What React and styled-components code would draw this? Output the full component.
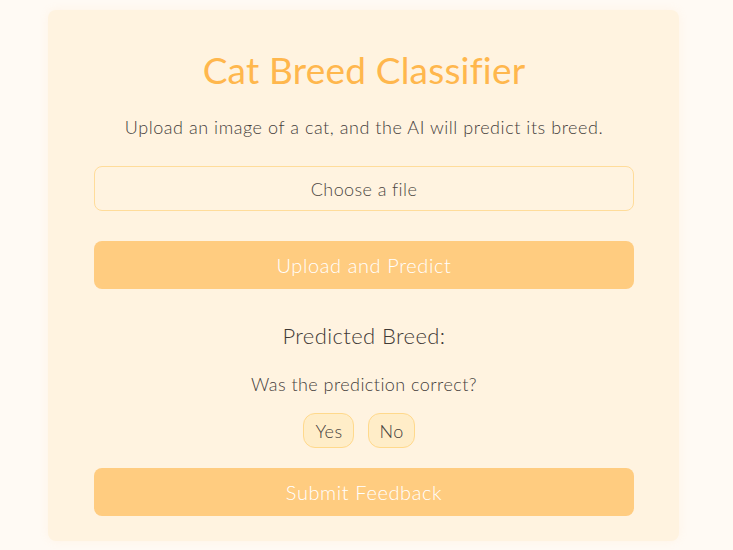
import React, { useState } from 'react'
import styled, { createGlobalStyle } from 'styled-components'

const GlobalStyle = createGlobalStyle`
    html, body {
        margin: 0;
        padding: 0;
        background: #fffaf4;
    }
    body {
        font-family: 'Lato', 'Noto Sans', sans-serif;
        color: #555555;
    }
`

const Page = styled.main`
    padding: 10px 54px 9px 48px;
`

const Card = styled.section`
    box-sizing: border-box;
    width: 631px;
    padding: 38px 45px 25px 46px;
    background: #fff3e0;
    border-radius: 8px;
    box-shadow: 0 0 10px rgba(255, 200, 140, 0.12);
    display: flex;
    flex-direction: column;
    align-items: stretch;
    text-align: center;
`

const Title = styled.h1`
    margin: 0;
    font-family: 'Lato', sans-serif;
    font-weight: 400;
    font-size: 37px;
    line-height: 44px;
    letter-spacing: 0.2px;
    color: #ffb74d;
`

const Subtitle = styled.p`
    margin: 23px 0 0;
    font-size: 18px;
    font-weight: 300;
    line-height: 24px;
    letter-spacing: 0.55px;
    color: #45403c;
`

const FileLabel = styled.label`
    box-sizing: border-box;
    margin-top: 27px;
    height: 45px;
    display: flex;
    align-items: center;
    justify-content: center;
    border: 1px solid #ffdc9a;
    border-radius: 8px;
    font-size: 18px;
    font-weight: 300;
    letter-spacing: 0.4px;
    color: #4c4743;
    cursor: pointer;

    input {
        display: none;
    }
`

const WideButton = styled.button`
    margin-top: ${p => p.$top}px;
    height: 48px;
    border: none;
    border-radius: 8px;
    background: #ffcc80;
    color: #ffffff;
    font-family: inherit;
    font-size: 20px;
    font-weight: 300;
    letter-spacing: 0.6px;
    cursor: pointer;
`

const Result = styled.h2`
    margin: 32px 0 0;
    font-weight: 300;
    font-size: 22px;
    line-height: 30px;
    letter-spacing: 0.4px;
    color: #3f3a36;
`

const Question = styled.p`
    margin: 21px 0 0;
    font-size: 18px;
    font-weight: 300;
    line-height: 24px;
    letter-spacing: 0.45px;
    color: #45403c;
`

const Choices = styled.div`
    margin-top: 17px;
    padding-right: 10px;
    display: flex;
    justify-content: center;
    gap: 14px;
`

const Choice = styled.button`
    height: 35px;
    padding: 0 ${p => p.$pad}px;
    border: 1px solid #ffd98c;
    border-radius: 12px;
    background: ${p => (p.$active ? '#ffe0a8' : '#ffedc8')};
    color: #45403c;
    font-family: inherit;
    font-size: 18px;
    font-weight: 300;
    letter-spacing: 0.4px;
    cursor: pointer;
`

export default function App() {
    const [answer, setAnswer] = useState(null)

    return (
        <Page>
            <GlobalStyle />
            <Card>
                <Title>Cat Breed Classifier</Title>
                <Subtitle>Upload an image of a cat, and the AI will predict its breed.</Subtitle>
                <FileLabel>
                    <input type="file" accept="image/*" />
                    Choose a file
                </FileLabel>
                <WideButton $top={30}>Upload and Predict</WideButton>
                <Result>Predicted Breed:</Result>
                <Question>Was the prediction correct?</Question>
                <Choices>
                    <Choice $pad={11} $active={answer === 'yes'} onClick={() => setAnswer('yes')}>Yes</Choice>
                    <Choice $pad={10} $active={answer === 'no'} onClick={() => setAnswer('no')}>No</Choice>
                </Choices>
                <WideButton $top={20}>Submit Feedback</WideButton>
            </Card>
        </Page>
    )
}
